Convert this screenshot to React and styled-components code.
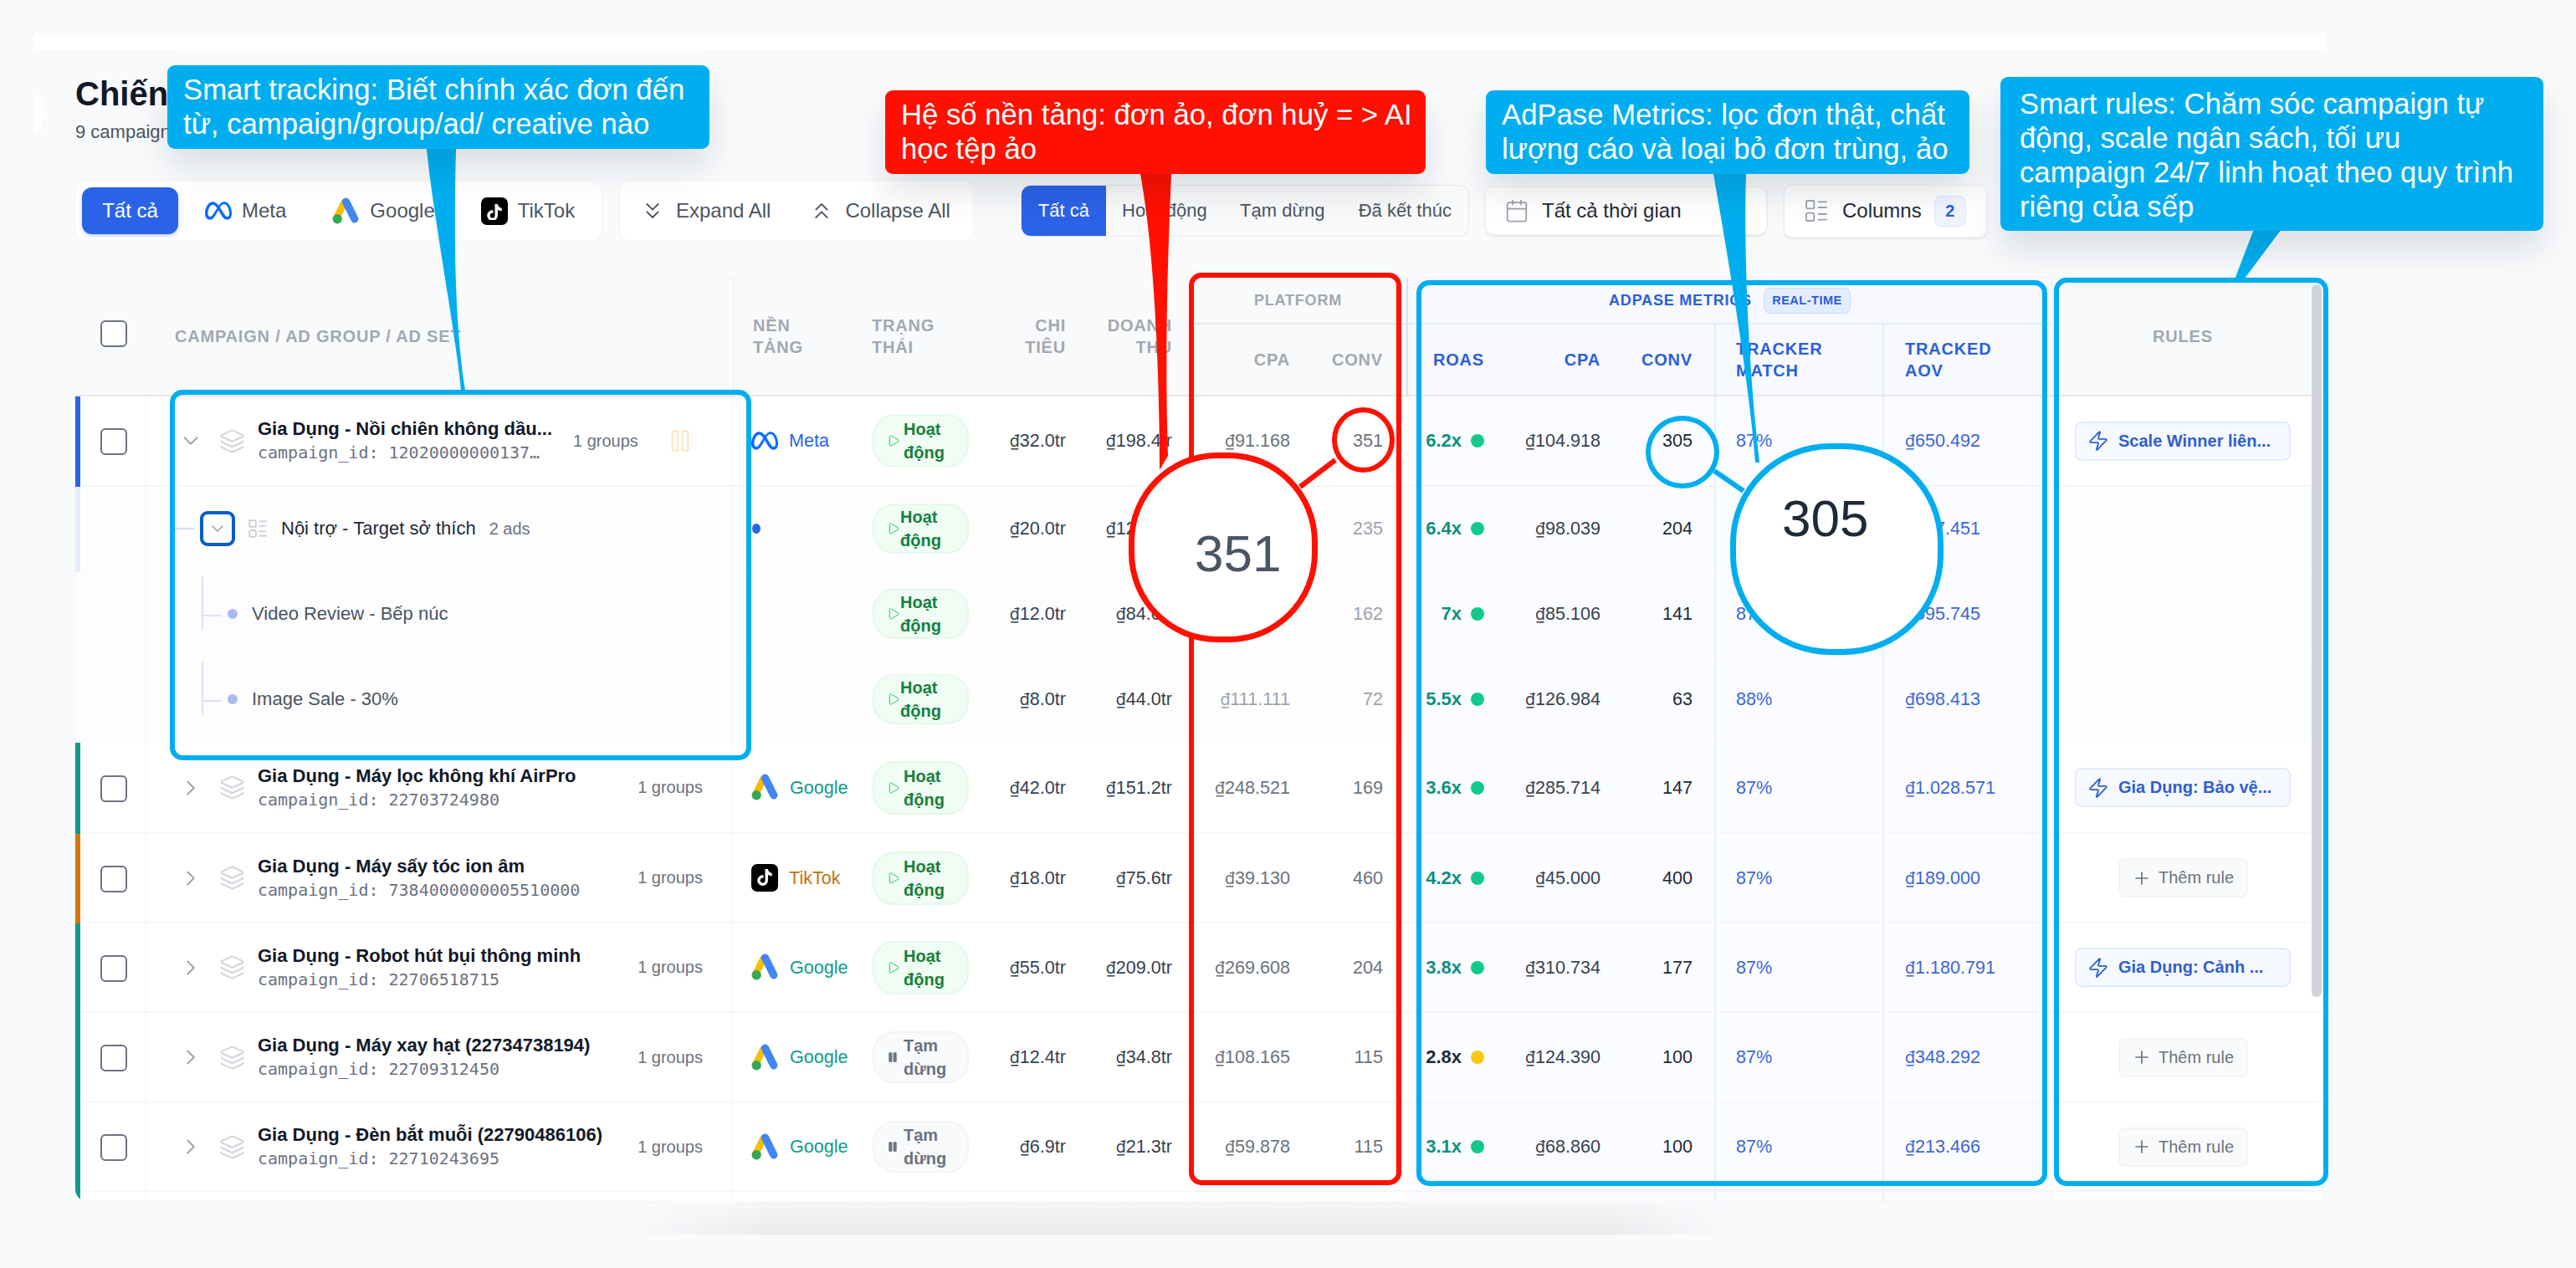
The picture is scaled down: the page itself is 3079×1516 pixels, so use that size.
import styled, { createGlobalStyle } from "styled-components";
import {
  Calendar,
  ChevronDown,
  ChevronRight,
  ChevronsDown,
  ChevronsUp,
  Layers,
  LayoutList,
  Pause,
  Play,
  Plus,
  Zap,
} from "lucide-react";
import { FaTiktok } from "react-icons/fa";
import { SiMeta } from "react-icons/si";

const COLS =
  "85px 701px 146px 158px 115px 127px 141px 118px 119px 134px 115px 201px 202px 312px";

const GlobalStyle = createGlobalStyle`
  html, body {
    margin: 0;
    background: #f8fafc;
    font-family: "Liberation Sans", Arial, sans-serif;
    color: #111827;
  }
  * { box-sizing: border-box; }
`;

const Page = styled.div`
  position: relative;
  width: 3079px;
  height: 1516px;
  overflow: hidden;
  padding-top: 40px;
`;
const TopStrip = styled.div`
  margin-left: 40px;
  width: 2740px;
  height: 20px;
  background: #fff;
`;
const Notch = styled.div`
  position: absolute;
  left: 40px;
  top: 112px;
  width: 13px;
  height: 48px;
  background: #fff;
  border-radius: 0 13px 13px 0 / 0 24px 24px 0;
`;
const Content = styled.div`
  padding-left: 90px;
`;
const Title = styled.h1`
  margin: 27px 0 0;
  font-size: 40px;
  line-height: 50px;
  font-weight: 700;
  color: #111827;
`;
const Subtitle = styled.div`
  margin-top: 8px;
  font-size: 22px;
  line-height: 26px;
  color: #4b5563;
`;
const Toolbar = styled.div`
  margin-top: 45px;
  height: 72px;
  display: flex;
  align-items: center;
`;
const Panel = styled.div`
  width: ${(p) => p.$w}px;
  margin-right: ${(p) => p.$gap}px;
  height: 72px;
  display: flex;
  align-items: center;
  padding: 8px;
  background: #fff;
  border-radius: 14px;
  box-shadow: 0 0 0 1px #f3f4f6;
`;
const FilterAll = styled.div`
  width: 115px;
  height: 56px;
  display: flex;
  align-items: center;
  justify-content: center;
  background: #2b63e8;
  color: #fff;
  border-radius: 12px;
  font-size: 24px;
  box-shadow: 0 2px 4px rgba(37, 99, 235, 0.3);
`;
const PlatformTab = styled.div`
  display: flex;
  align-items: center;
  margin-left: ${(p) => p.$ml}px;
  gap: 12px;
  font-size: 24px;
  color: #4b5563;
`;
const BulkButton = styled.div`
  display: flex;
  align-items: center;
  margin-left: ${(p) => p.$ml}px;
  gap: 12px;
  font-size: 24px;
  color: #4b5563;
`;
const StatusTabs = styled.div`
  width: 536px;
  height: 62px;
  margin-right: 19px;
  display: flex;
  align-items: center;
  background: #f9fafb;
  border: 1px solid #e5e7eb;
  border-radius: 12px;
  overflow: hidden;
`;
const StatusTab = styled.div`
  height: 100%;
  width: ${(p) => p.$w}px;
  display: flex;
  align-items: center;
  justify-content: center;
  font-size: 22px;
  color: ${(p) => (p.$active ? "#fff" : "#4b5563")};
  background: ${(p) => (p.$active ? "#2b63e8" : "transparent")};
`;
const SelectBox = styled.div`
  width: ${(p) => p.$w}px;
  height: ${(p) => p.$h}px;
  margin-right: ${(p) => p.$gap}px;
  padding-left: 22px;
  display: flex;
  align-items: center;
  gap: 15px;
  background: #fff;
  border-radius: 10px;
  border: 1px solid #eceef1;
  box-shadow: 0 2px 3px rgba(0, 0, 0, 0.08);
  font-size: 24px;
  color: #1f2937;
`;
const CountBadge = styled.span`
  width: 38px;
  height: 37px;
  display: flex;
  align-items: center;
  justify-content: center;
  background: #eff4ff;
  border: 1px solid #dbe6fe;
  border-radius: 8px;
  color: #2b5fd9;
  font-size: 20px;
  font-weight: 700;
`;

const TableCard = styled.div`
  position: relative;
  margin-top: 44px;
  width: 2686px;
  height: 1104px;
  background: #fff;
  border-radius: 14px 14px 0 14px;
  box-shadow: 0 0 0 1px #f3f4f6;
  overflow: hidden;
`;
const HeadGrid = styled.div`
  display: grid;
  grid-template-columns: ${COLS};
  grid-template-rows: 56px 84px;
  height: 142px;
  background: #f9fafb;
  border-bottom: 2px solid #e5e7eb;
`;
const HeadCell = styled.div`
  grid-column: ${(p) => p.$col};
  grid-row: ${(p) => p.$row || "1 / span 2"};
  display: flex;
  align-items: center;
  justify-content: ${(p) => p.$justify || "flex-start"};
  padding: 0 ${(p) => p.$pr || 0}px 0 ${(p) => p.$pl || 0}px;
  text-align: ${(p) => (p.$justify === "flex-end" ? "right" : "left")};
  font-size: ${(p) => (p.$small ? 18 : 20)}px;
  line-height: 26px;
  font-weight: 700;
  letter-spacing: 0.8px;
  text-transform: uppercase;
  white-space: nowrap;
  color: ${(p) => (p.$blue ? "#2b5fd9" : "#a2a8b2")};
  background: ${(p) => (p.$blue ? "#f7f9fe" : "transparent")};
  border-left: ${(p) => (p.$divider ? `2px solid ${p.$divider}` : "none")};
  border-bottom: ${(p) => (p.$under ? `2px solid ${p.$under}` : "none")};
`;
const RealTime = styled.span`
  margin-left: 14px;
  width: 104px;
  height: 31px;
  display: inline-flex;
  align-items: center;
  justify-content: center;
  background: #e3ecfe;
  border: 1px solid #c7d8fb;
  border-radius: 8px;
  font-size: 14.5px;
  letter-spacing: 0.5px;
`;
const HeaderCheck = styled.div`
  grid-column: 1;
  grid-row: 1 / span 2;
  display: flex;
  align-items: center;
  padding: 0 0 6px 30px;
`;
const Checkbox = styled.div`
  width: 32px;
  height: 32px;
  background: #fff;
  border: 2px solid #6b7280;
  border-radius: 6px;
`;

const Row = styled.div`
  display: grid;
  grid-template-columns: ${COLS};
  height: ${(p) => p.$h}px;
  background: ${(p) => (p.$child ? "#fdfdfe" : "#fff")};
  border-bottom: 2px solid ${(p) => (p.$child ? "#fbfbfc" : "#f5f6f8")};
`;
const CheckCell = styled.div`
  display: flex;
  align-items: center;
  margin-bottom: -2px;
  padding-left: 24px;
  border-left: 6px solid ${(p) => p.$accent};
  border-right: 2px solid #f7f8f9;
`;
const CampaignCell = styled.div`
  display: flex;
  align-items: center;
  padding-left: ${(p) => p.$pl}px;
  border-right: 2px solid #f7f8f9;
`;
const CampaignText = styled.div`
  width: ${(p) => (p.$short ? "356px" : "auto")};
  margin-left: 15px;
`;
const CampaignName = styled.div`
  font-size: 22px;
  line-height: 28px;
  font-weight: 700;
  color: #111827;
  white-space: nowrap;
`;
const CampaignId = styled.div`
  font-family: "DejaVu Sans Mono", monospace;
  font-size: 20px;
  line-height: 28px;
  color: #6b7280;
  white-space: nowrap;
`;
const Groups = styled.div`
  margin-left: ${(p) => (p.$short ? "21px" : "auto")};
  margin-right: 34px;
  font-size: 20px;
  color: #6b7280;
  white-space: nowrap;
`;
const FocusRing = styled.div`
  width: 42px;
  height: 42px;
  display: flex;
  align-items: center;
  justify-content: center;
  border: 4px solid #0a5cc7;
  border-radius: 9px;
`;
const Connector = styled.div`
  width: 23px;
  height: 2px;
  margin-right: 7px;
  background: #d5dcf8;
`;
const AdGroupName = styled.div`
  margin-left: 15px;
  font-size: 22px;
  color: #1f2937;
  white-space: nowrap;
`;
const AdCount = styled.div`
  margin-left: 16px;
  font-size: 20px;
  color: #6b7280;
`;
const AdCell = styled.div`
  display: flex;
  align-items: center;
  padding-left: 66px;
  border-right: 2px solid #f7f8f9;
`;
const Tree = styled.div`
  width: 22px;
  height: 64px;
  align-self: flex-start;
  margin-top: 5px;
  position: relative;
  border-left: 2px solid #dbe2fb;
  &::after {
    content: "";
    position: absolute;
    left: 0;
    top: 46px;
    width: 22px;
    height: 2px;
    background: #dbe2fb;
  }
`;
const AdDot = styled.div`
  width: 12px;
  height: 12px;
  margin-left: 9px;
  border-radius: 50%;
  background: #a9baf3;
`;
const AdName = styled.div`
  margin-left: 17px;
  font-size: 22px;
  color: #4b5563;
  white-space: nowrap;
`;
const PlatformCell = styled.div`
  display: flex;
  align-items: center;
  gap: 13px;
  padding-left: 22px;
  font-size: 21.6px;
  color: ${(p) => p.$color};
`;
const ChildDot = styled.div`
  margin-left: 1px;
  width: 10px;
  height: 12px;
  border-radius: 50%;
  background: #2b63e8;
`;
const StatusCell = styled.div`
  display: flex;
  align-items: center;
  padding-left: 21px;
`;
const StatusPill = styled.div`
  width: 115px;
  height: ${(p) => p.$h}px;
  display: flex;
  align-items: center;
  gap: ${(p) => p.$gap}px;
  padding-left: 15px;
  background: ${(p) => (p.$paused ? "#f9fafb" : "#f0fdf4")};
  border: 2px solid ${(p) => (p.$paused ? "#f3f4f6" : "#e3f9ea")};
  border-radius: 26px;
  color: ${(p) => (p.$paused ? "#6b7280" : "#15803d")};
  font-size: 20px;
  line-height: 28px;
  font-weight: 700;
`;
const NumCell = styled.div`
  display: flex;
  align-items: center;
  justify-content: flex-end;
  padding-right: ${(p) => p.$pr}px;
  font-size: 21.6px;
  color: ${(p) => p.$color};
  background: ${(p) => (p.$tint ? "#fbfcff" : "transparent")};
`;
const DongSign = styled.span`
  font-family: Inter, sans-serif;
  font-size: 19.5px;
`;
const RoasCell = styled.div`
  display: flex;
  align-items: center;
  justify-content: flex-end;
  gap: 11px;
  padding-right: 26px;
  font-size: 22px;
  font-weight: 700;
  color: ${(p) => (p.$warn ? "#1f2937" : "#0f8f7f")};
  background: #fbfcff;
`;
const RoasDot = styled.span`
  width: 16px;
  height: 16px;
  border-radius: 50%;
  background: ${(p) => (p.$warn ? "#fbc90d" : "#12c98c")};
`;
const LinkCell = styled.div`
  display: flex;
  align-items: center;
  padding-left: ${(p) => p.$pl}px;
  font-size: 21.6px;
  color: #3b66d6;
  background: #fbfcff;
  border-left: 2px solid #e6edfb;
`;
const RuleCell = styled.div`
  display: flex;
  align-items: center;
  justify-content: center;
  border-left: 2px solid #f7f8f9;
  background: ${(p) => (p.$child ? "#fdfeff" : "transparent")};
`;
const RuleButton = styled.div`
  width: 258px;
  height: 47px;
  display: flex;
  align-items: center;
  gap: 11px;
  padding-left: 13px;
  background: #f6f9ff;
  border: 2px solid #e2eafb;
  border-radius: 8px;
  color: #2f5fd0;
  font-size: 20px;
  font-weight: 700;
  white-space: nowrap;
`;
const AddRule = styled.div`
  width: 155px;
  height: 47px;
  display: flex;
  align-items: center;
  justify-content: center;
  gap: 8px;
  background: #f9fafb;
  border: 2px solid #f3f4f6;
  border-radius: 8px;
  color: #6b7280;
  font-size: 20px;
`;
const ScrollThumb = styled.div`
  position: absolute;
  right: 1px;
  top: 8px;
  width: 12px;
  height: 852px;
  background: #d1d5db;
  border-radius: 6px;
`;
const FootShadow = styled.div`
  margin-left: 670px;
  width: 1300px;
  height: 40px;
  background: linear-gradient(#f6f7f9, #e9eaec);
  -webkit-mask-image: linear-gradient(90deg, transparent, #000 12%, #000 90%, transparent);
`;

/* annotation layer */
const Callout = styled.div`
  position: absolute;
  left: ${(p) => p.$x}px;
  top: ${(p) => p.$y}px;
  width: ${(p) => p.$w}px;
  height: ${(p) => p.$h}px;
  padding: ${(p) => p.$pt || 9}px 0 0 ${(p) => p.$pl || 19}px;
  background: ${(p) => p.$color};
  color: #fff;
  border-radius: 9px;
  font-size: 34.7px;
  line-height: 41px;
  white-space: nowrap;
  box-shadow: 0 22px 40px rgba(15, 23, 42, 0.12);
`;
const RingBox = styled.div`
  position: absolute;
  left: ${(p) => p.$x}px;
  top: ${(p) => p.$y}px;
  width: ${(p) => p.$w}px;
  height: ${(p) => p.$h}px;
  border: 6px solid ${(p) => p.$color};
  border-radius: 15px;
`;
const Ellipse = styled.div`
  position: absolute;
  left: ${(p) => p.$x}px;
  top: ${(p) => p.$y}px;
  width: ${(p) => p.$w}px;
  height: ${(p) => p.$h}px;
  border: 6px solid ${(p) => p.$color};
  border-radius: 50%;
`;
const Magnifier = styled.div`
  position: absolute;
  left: ${(p) => p.$x}px;
  top: ${(p) => p.$y}px;
  width: ${(p) => p.$w}px;
  height: ${(p) => p.$h}px;
  padding-top: ${(p) => p.$pt}px;
  padding-left: ${(p) => p.$pl}px;
  background: #fff;
  border: 7px solid ${(p) => p.$color};
  border-radius: 47%;
  font-size: 62px;
  line-height: 80px;
  color: ${(p) => p.$text};
`;
const TailLayer = styled.svg`
  position: absolute;
  left: 0;
  top: 0;
  pointer-events: none;
`;
const IconTile = styled.span`
  display: inline-flex;
  margin-left: ${(p) => p.$ml}px;
  color: ${(p) => p.$color};
`;

const GoogleAdsLogo = ({ size = 33 }) => (
  <svg width={size} height={size} viewBox="0 0 32 32" fill="none">
    <path d="M14 6 L5 24" stroke="#fbbc04" strokeWidth="8" strokeLinecap="round" />
    <path d="M16 5 L26 25" stroke="#4285f4" strokeWidth="9" strokeLinecap="round" />
    <circle cx="6" cy="25" r="5.5" fill="#34a853" />
  </svg>
);

const TikTokLogo = () => (
  <svg width="32" height="33" viewBox="0 0 32 33">
    <rect width="32" height="33" rx="7" fill="#000" />
    <foreignObject x="6" y="6" width="20" height="21">
      <FaTiktok color="#fff" size={20} />
    </foreignObject>
  </svg>
);

// liberation sans draws the dong sign tiny, so it gets its own span
const Money = ({ value }) => (
  <span>
    <DongSign>{value[0]}</DongSign>
    {value.slice(1)}
  </span>
);

const rows = [
  {
    kind: "campaign", h: 108, accent: "#2b63e8", short: true, open: true,
    name: "Gia Dụng - Nồi chiên không dầu...", id: "campaign_id: 12020000000137…",
    platform: "Meta", spend: "₫32.0tr", revenue: "₫198.4tr", pCpa: "₫91.168", pConv: "351",
    roas: "6.2x", cpa: "₫104.918", conv: "305", match: "87%", aov: "₫650.492",
    rule: "Scale Winner liên...",
  },
  {
    kind: "group", h: 102, accent: "#e7ecfc", name: "Nội trợ - Target sở thích",
    spend: "₫20.0tr", revenue: "₫124.0tr", pCpa: "₫85.106", pConv: "235",
    roas: "6.4x", cpa: "₫98.039", conv: "204", match: "87%", aov: "₫627.451",
  },
  {
    kind: "ad", h: 102, accent: "transparent", name: "Video Review - Bếp núc",
    spend: "₫12.0tr", revenue: "₫84.0tr", pCpa: "₫74.074", pConv: "162",
    roas: "7x", cpa: "₫85.106", conv: "141", match: "87%", aov: "₫595.745",
  },
  {
    kind: "ad", h: 102, accent: "transparent", name: "Image Sale - 30%",
    spend: "₫8.0tr", revenue: "₫44.0tr", pCpa: "₫111.111", pConv: "72",
    roas: "5.5x", cpa: "₫126.984", conv: "63", match: "88%", aov: "₫698.413",
  },
  {
    kind: "campaign", h: 109, accent: "#0f9b8e", name: "Gia Dụng - Máy lọc không khí AirPro",
    id: "campaign_id: 22703724980", platform: "Google", spend: "₫42.0tr", revenue: "₫151.2tr",
    pCpa: "₫248.521", pConv: "169", roas: "3.6x", cpa: "₫285.714", conv: "147", match: "87%",
    aov: "₫1.028.571", rule: "Gia Dụng: Bảo vệ...",
  },
  {
    kind: "campaign", h: 107, accent: "#d97706", name: "Gia Dụng - Máy sấy tóc ion âm",
    id: "campaign_id: 7384000000005510000", platform: "TikTok", spend: "₫18.0tr", revenue: "₫75.6tr",
    pCpa: "₫39.130", pConv: "460", roas: "4.2x", cpa: "₫45.000", conv: "400", match: "87%",
    aov: "₫189.000",
  },
  {
    kind: "campaign", h: 107, accent: "#0f9b8e", name: "Gia Dụng - Robot hút bụi thông minh",
    id: "campaign_id: 22706518715", platform: "Google", spend: "₫55.0tr", revenue: "₫209.0tr",
    pCpa: "₫269.608", pConv: "204", roas: "3.8x", cpa: "₫310.734", conv: "177", match: "87%",
    aov: "₫1.180.791", rule: "Gia Dụng: Cảnh ...",
  },
  {
    kind: "campaign", h: 108, accent: "#0f9b8e", paused: true, warn: true,
    name: "Gia Dụng - Máy xay hạt (22734738194)", id: "campaign_id: 22709312450", platform: "Google",
    spend: "₫12.4tr", revenue: "₫34.8tr", pCpa: "₫108.165", pConv: "115", roas: "2.8x",
    cpa: "₫124.390", conv: "100", match: "87%", aov: "₫348.292",
  },
  {
    kind: "campaign", h: 106, accent: "#0f9b8e", paused: true, name: "Gia Dụng - Đèn bắt muỗi (22790486106)",
    id: "campaign_id: 22710243695", platform: "Google", spend: "₫6.9tr", revenue: "₫21.3tr",
    pCpa: "₫59.878", pConv: "115", roas: "3.1x", cpa: "₫68.860", conv: "100", match: "87%",
    aov: "₫213.466",
  },
];

const platformColor = { Meta: "#2563eb", Google: "#0f9b8e", TikTok: "#c2720c" };

const PlatformLogo = ({ name }) => {
  if (name === "Meta") return <SiMeta size={32} color="#0a6cff" />;
  if (name === "TikTok") return <TikTokLogo />;
  return <GoogleAdsLogo />;
};

const NameCell = ({ row }) => {
  if (row.kind === "group") {
    return (
      <CampaignCell $pl={34}>
        <Connector />
        <FocusRing>
          <ChevronDown size={24} color="#9ca3af" strokeWidth={1.6} />
        </FocusRing>
        <IconTile $color="#c5cad3" $ml={14}>
          <LayoutList size={26} strokeWidth={1.6} />
        </IconTile>
        <AdGroupName>{row.name}</AdGroupName>
        <AdCount>2 ads</AdCount>
      </CampaignCell>
    );
  }
  if (row.kind === "ad") {
    return (
      <AdCell>
        <Tree />
        <AdDot />
        <AdName>{row.name}</AdName>
      </AdCell>
    );
  }
  const Chevron = row.open ? ChevronDown : ChevronRight;
  return (
    <CampaignCell $pl={38}>
      <Chevron size={30} color="#9ca3af" strokeWidth={1.5} />
      <IconTile $color="#d1d5db" $ml={19}>
        <Layers size={31} strokeWidth={1.6} />
      </IconTile>
      <CampaignText $short={row.short}>
        <CampaignName>{row.name}</CampaignName>
        <CampaignId>{row.id}</CampaignId>
      </CampaignText>
      <Groups $short={row.short}>1 groups</Groups>
      {row.short && <Pause size={32} color="#fde6bd" strokeWidth={1.6} />}
    </CampaignCell>
  );
};

const TableRow = ({ row }) => {
  const child = row.kind !== "campaign";
  const faded = child ? "#9ca3af" : "#6b7280";
  return (
    <Row $h={row.h} $child={child}>
      <CheckCell $accent={row.accent}>{!child && <Checkbox />}</CheckCell>
      <NameCell row={row} />
      <PlatformCell $color={platformColor[row.platform]}>
        {row.platform ? (
          <>
            <PlatformLogo name={row.platform} />
            {row.platform}
          </>
        ) : (
          row.kind === "group" && <ChildDot />
        )}
      </PlatformCell>
      <StatusCell>
        <StatusPill
          $paused={row.paused}
          $h={child ? 60 : row.paused ? 62 : 64}
          $gap={row.paused ? 6 : child ? 0 : 4}
        >
          {row.paused ? (
            <Pause size={14} color="#6b7280" fill="#6b7280" />
          ) : (
            <Play size={16} color="#22c55e" strokeWidth={1.5} />
          )}
          <span>
            {row.paused ? "Tạm" : "Hoạt"}
            <br />
            {row.paused ? "dừng" : "động"}
          </span>
        </StatusPill>
      </StatusCell>
      <NumCell $pr={21} $color="#374151"><Money value={row.spend} /></NumCell>
      <NumCell $pr={21} $color="#374151"><Money value={row.revenue} /></NumCell>
      <NumCell $pr={21} $color={faded}><Money value={row.pCpa} /></NumCell>
      <NumCell $pr={28} $color={faded}>{row.pConv}</NumCell>
      <RoasCell $warn={row.warn}>
        {row.roas}
        <RoasDot $warn={row.warn} />
      </RoasCell>
      <NumCell $pr={21} $color="#374151" $tint><Money value={row.cpa} /></NumCell>
      <NumCell $pr={26} $color="#1f2937" $tint>{row.conv}</NumCell>
      <LinkCell $pl={24}>{row.match}</LinkCell>
      <LinkCell $pl={25}><Money value={row.aov} /></LinkCell>
      <RuleCell $child={child}>
        {row.rule && (
          <RuleButton>
            <Zap size={26} strokeWidth={1.7} />
            {row.rule}
          </RuleButton>
        )}
        {!row.rule && !child && (
          <AddRule>
            <Plus size={24} strokeWidth={1.7} />
            Thêm rule
          </AddRule>
        )}
      </RuleCell>
    </Row>
  );
};

// the row that is cut off by the bottom of the scroll area
const CutRow = () => (
  <Row $h={14}>
    <CheckCell $accent="#0f9b8e" />
    <CampaignCell $pl={0} />
    <div />
    <div />
    <div />
    <div />
    <div />
    <div />
    <RoasCell />
    <NumCell $tint />
    <NumCell $tint />
    <LinkCell />
    <LinkCell />
    <RuleCell />
  </Row>
);

const Annotations = () => (
  <>
    <RingBox $x={203} $y={466} $w={695} $h={443} $color="#00aeef" />
    <RingBox $x={1421} $y={326} $w={254} $h={1091} $color="#ff1000" />
    <RingBox $x={1693} $y={335} $w={754} $h={1083} $color="#00aeef" />
    <RingBox $x={2455} $y={332} $w={328} $h={1086} $color="#00aeef" />
    <Ellipse $x={1592} $y={487} $w={75} $h={78} $color="#ff1000" />
    <Ellipse $x={1967} $y={497} $w={88} $h={87} $color="#00aeef" />
    <TailLayer width="3079" height="1516" viewBox="0 0 3079 1516">
      <path d="M510 178 C518 260 545 400 551 466 L556 466 C542 380 543 260 545 178 Z" fill="#00aeef" />
      <path d="M1363 208 C1380 300 1386 450 1386 562 L1396 545 C1392 420 1396 300 1400 208 Z" fill="#ff1000" />
      <path d="M2048 208 C2064 300 2090 450 2098 553 L2103 553 C2090 440 2084 300 2087 208 Z" fill="#00aeef" />
      <path d="M2694 274 L2671 334 L2682 334 L2727 274 Z" fill="#00aeef" />
      <path d="M1554 582 L1596 550" stroke="#ff1000" strokeWidth="6" />
      <path d="M2049 563 L2084 587" stroke="#00aeef" strokeWidth="6" />
    </TailLayer>
    <Magnifier $x={1349} $y={541} $w={226} $h={227} $pt={74} $pl={72} $color="#ff1000" $text="#4b5563">
      351
    </Magnifier>
    <Magnifier $x={2068} $y={530} $w={255} $h={253} $pt={43} $pl={55} $color="#00aeef" $text="#1f2937">
      305
    </Magnifier>
    <Callout $x={200} $y={78} $w={648} $h={100} $color="#00aeef">
      Smart tracking: Biết chính xác đơn đến
      <br />
      từ, campaign/group/ad/ creative nào
    </Callout>
    <Callout $x={1058} $y={108} $w={646} $h={100} $color="#ff1000">
      Hệ số nền tảng: đơn ảo, đơn huỷ = &gt; AI
      <br />
      học tệp ảo
    </Callout>
    <Callout $x={1776} $y={108} $w={578} $h={100} $color="#00aeef">
      AdPase Metrics: lọc đơn thật, chất
      <br />
      lượng cáo và loại bỏ đơn trùng, ảo
    </Callout>
    <Callout $x={2391} $y={92} $w={649} $h={184} $pl={23} $pt={12} $color="#00aeef">
      Smart rules: Chăm sóc campaign tự
      <br />
      động, scale ngân sách, tối ưu
      <br />
      campaign 24/7 linh hoạt theo quy trình
      <br />
      riêng của sếp
    </Callout>
  </>
);

export default function App() {
  return (
    <Page>
      <GlobalStyle />
      <TopStrip />
      <Notch />
      <Content>
        <Title>Chiến dịch</Title>
        <Subtitle>9 campaigns</Subtitle>
        <Toolbar>
          <Panel $w={629} $gap={22}>
            <FilterAll>Tất cả</FilterAll>
            <PlatformTab $ml={32}>
              <SiMeta size={32} color="#0a6cff" />
              Meta
            </PlatformTab>
            <PlatformTab $ml={55}>
              <GoogleAdsLogo />
              Google
            </PlatformTab>
            <PlatformTab $ml={55}>
              <TikTokLogo />
              TikTok
            </PlatformTab>
          </Panel>
          <Panel $w={422} $gap={57}>
            <BulkButton $ml={15}>
              <ChevronsDown size={32} strokeWidth={1.4} />
              Expand All
            </BulkButton>
            <BulkButton $ml={45}>
              <ChevronsUp size={32} strokeWidth={1.4} />
              Collapse All
            </BulkButton>
          </Panel>
          <StatusTabs>
            <StatusTab $w={101} $active>Tất cả</StatusTab>
            <StatusTab $w={141}>Hoạt động</StatusTab>
            <StatusTab $w={142}>Tạm dừng</StatusTab>
            <StatusTab $w={152}>Đã kết thúc</StatusTab>
          </StatusTabs>
          <SelectBox $w={337} $h={58} $gap={20}>
            <Calendar size={30} color="#9ca3af" strokeWidth={1.4} />
            Tất cả thời gian
          </SelectBox>
          <SelectBox $w={243} $h={63} $gap={0}>
            <LayoutList size={32} color="#9ca3af" strokeWidth={1.4} />
            Columns
            <CountBadge>2</CountBadge>
          </SelectBox>
        </Toolbar>
        <TableCard>
          <HeadGrid>
            <HeaderCheck>
              <Checkbox />
            </HeaderCheck>
            <HeadCell $col="2" $pl={34}>Campaign / Ad Group / Ad Set</HeadCell>
            <HeadCell $col="3" $pl={22} $divider="#f1f2f4">Nền<br />tảng</HeadCell>
            <HeadCell $col="4" $pl={20}>Trạng<br />thái</HeadCell>
            <HeadCell $col="5" $justify="flex-end" $pr={21}>Chi<br />tiêu</HeadCell>
            <HeadCell $col="6" $justify="flex-end" $pr={21}>Doanh<br />thu</HeadCell>
            <HeadCell $col="7 / span 2" $row="1" $justify="center" $small $under="#e5e7eb">Platform</HeadCell>
            <HeadCell $col="7" $row="2" $justify="flex-end" $pr={21}>CPA</HeadCell>
            <HeadCell $col="8" $row="2" $justify="flex-end" $pr={28}>Conv</HeadCell>
            <HeadCell $col="9 / span 5" $row="1" $justify="center" $small $blue $under="#e3ebfb" $divider="#d5e2fb">
              AdPase Metrics
              <RealTime>Real-time</RealTime>
            </HeadCell>
            <HeadCell $col="9" $row="2" $blue $pl={30} $divider="#d5e2fb">ROAS</HeadCell>
            <HeadCell $col="10" $row="2" $blue $justify="flex-end" $pr={21}>CPA</HeadCell>
            <HeadCell $col="11" $row="2" $blue $justify="flex-end" $pr={26}>Conv</HeadCell>
            <HeadCell $col="12" $row="2" $blue $pl={24} $divider="#e3ebfb">Tracker<br />Match</HeadCell>
            <HeadCell $col="13" $row="2" $blue $pl={25} $divider="#e3ebfb">Tracked<br />AOV</HeadCell>
            <HeadCell $col="14" $justify="center" $divider="#f1f2f4">Rules</HeadCell>
          </HeadGrid>
          {rows.map((row) => (
            <TableRow key={row.name} row={row} />
          ))}
          <CutRow />
          <ScrollThumb />
        </TableCard>
        <FootShadow />
      </Content>
      <Annotations />
    </Page>
  );
}
